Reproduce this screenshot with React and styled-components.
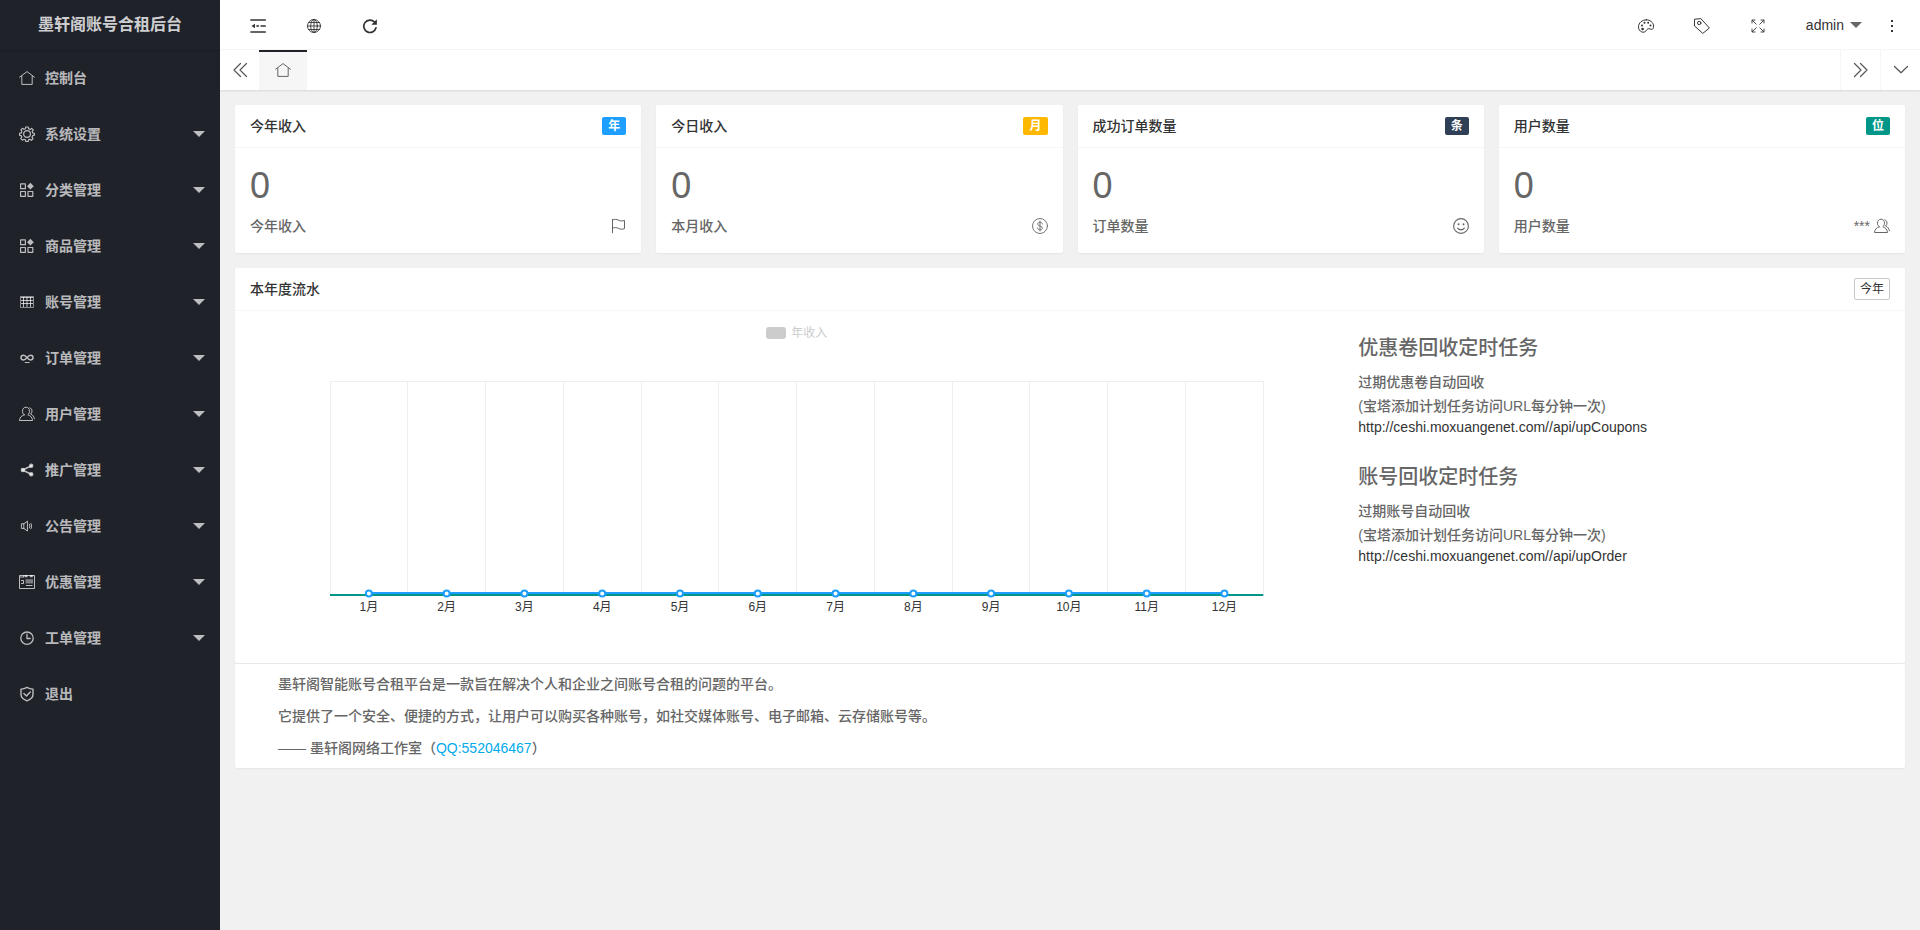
import React, { useState } from "react";
import styled, { createGlobalStyle, css } from "styled-components";

const MONTHS = Array.from({ length: 12 }, (_, i) => `${i + 1}月`);

const stroke = {
  fill: "none",
  stroke: "currentColor",
  strokeLinecap: "round",
  strokeLinejoin: "round",
};

const icons = {
  home: (
    <g {...stroke}>
      <path d="M.6 7.2 8 1.6l7.400 5.600M2.800 6.200v8.200h10.400V6.200" />
    </g>
  ),
  gear: (
    <g {...stroke} strokeWidth="1.200">
      <circle cx="8" cy="8" r="3.400" />
      <path d="M6.800 1h2.400l.4 1.800 1.400.6 1.600-1 1.600 1.600-1 1.600.6 1.400 1.600.4v1.800l-1.700.5-.6 1.400 1 1.600-1.600 1.600-1.600-1-1.400.6-.4 1.600H6.800l-.4-1.700-1.400-.6-1.600 1-1.600-1.600 1-1.600-.6-1.300-1.600-.4V7.400l1.700-.5.6-1.400-1-1.600 1.600-1.600 1.500 1 1.400-.6z" />
    </g>
  ),
  component: (
    <>
      <g {...stroke} strokeWidth="1.200">
        <path d="M1.600 1.900h4.800v4.800H1.600zM1.600 9.500h4.800v4.800H1.600zM9 9.500h4.800v4.800H9z" />
      </g>
      <path fill="currentColor" d="m11.400.8 3.400 3.400-3.400 3.400L8 4.200z" />
    </>
  ),
  table: (
    <g {...stroke} strokeLinecap="butt">
      <path d="M1.500 2.500h13v11h-13z" opacity=".7" />
      <path d="M2 3.500h12M2 6.500h12M2 9.500h12M4.500 3v10M8 3v10M11.500 3v10" />
    </g>
  ),
  infinity: (
    <g {...stroke} strokeWidth="1.500">
      <path d="M8 7.600C6.800 6 5.800 5.200 4.400 5.200a2.400 2.400 0 0 0 0 4.800C5.800 10 6.800 9.200 8 7.600s2.200-2.400 3.600-2.400a2.400 2.400 0 0 1 0 4.800C10.200 10 9.200 9.200 8 7.600z" />
      <path d="M6.200 12.500h4" strokeWidth="1" />
    </g>
  ),
  users: (
    <g {...stroke}>
      <path d="M5.200 8.800C4.100 8 3.500 6.700 3.500 5.200c0-2.300 1.400-4 3.500-4s3.500 1.700 3.500 4c0 1.500-.6 2.800-1.700 3.600 2.700.9 4.500 2.600 4.700 5.700H.5c.2-3.100 2-4.800 4.700-5.700z" />
      <path d="M10.800 1.800c1.500.5 2.200 1.800 2.200 3.200 0 1.200-.5 2.300-1.400 3 2.100.9 3.400 2.500 3.800 4.800" />
    </g>
  ),
  share: (
    <>
      <path d="M12.600 3.800 3.600 8l9 4.500" {...stroke} strokeWidth="1.600" />
      <g fill="currentColor">
        <circle cx="3.800" cy="8" r="2.200" />
        <circle cx="12.200" cy="3.800" r="2.200" />
        <circle cx="12.200" cy="12.300" r="2.200" />
      </g>
    </>
  ),
  speaker: (
    <g {...stroke}>
      <path d="M2.800 5.800h2l3.600-2.600v9.800L4.800 10.400h-2zM4.800 5.800v4.600M10.300 6.200c.8 1.200.8 2.600 0 3.800M11.900 5.400c1 1.700 1 3.700 0 5.400" />
    </g>
  ),
  coupon: (
    <>
      <g {...stroke} strokeLinecap="butt" strokeLinejoin="miter">
        <path d="M.5 1.500h15v13H.5zM7 11.500h6.500M2 6.500h2.500v3H2" />
      </g>
      <path
        fill="currentColor"
        d="M5.500 1h3v2.200h-3zM10.800 1h3v2.200h-3zM4 1.500h1v2H1v-1h3z"
      />
      <path fill="currentColor" d="M6.500 5.200H14v4.300H6.500z" opacity=".6" />
    </>
  ),
  clock: (
    <g {...stroke} strokeWidth="1.300">
      <circle cx="8" cy="8.200" r="6.200" />
      <path d="M8 4.200v4.300h3.200" />
    </g>
  ),
  shield: (
    <g {...stroke} strokeWidth="1.400">
      <path d="M8 1.400c1.800 1 3.800 1.600 6 1.700v5.300c0 2.900-2.400 4.900-6 6.400-3.600-1.500-6-3.500-6-6.400V3.100c2.200-.1 4.200-.7 6-1.700z" />
      <path d="m4.900 7.600 2.500 2.500 3.900-4" />
    </g>
  ),
  shrink: (
    <>
      <path
        d="M.8 2h14.600M11 8h4.400M6.800 8h1.700M.8 14h14.600"
        {...stroke}
        strokeWidth="1.300"
      />
      <path fill="currentColor" d="M1.500 8 5 5.700v4.600z" />
    </>
  ),
  globe: (
    <g {...stroke} strokeWidth=".9">
      <circle cx="8" cy="8" r="6.500" />
      <ellipse cx="8" cy="8" rx="3.300" ry="6.500" />
      <path d="M8 1.500v13M1.500 8h13M2.600 4.500h10.800M2.600 11.500h10.800" />
    </g>
  ),
  refresh: (
    <>
      <path
        d="M14 9.800A6.200 6.200 0 1 1 12.500 4"
        {...stroke}
        strokeWidth="1.700"
      />
      <path fill="currentColor" d="M14.900 1.300v5.500H9.300z" />
    </>
  ),
  palette: (
    <>
      <path
        d="M8.300 1.800C12 1.800 15.500 4.300 15.500 8c0 2-.5 3.600-1.800 3.400-1.300-.2-1.900-.9-3.200-.7-1.500.2-1.700 1.300-2.700 2.400-.9 1-2.300 1.500-4.100.8C1.500 13 .5 11 .5 8.800c0-4 3.800-7 7.800-7z"
        {...stroke}
      />
      <g fill="currentColor">
        <circle cx="4.600" cy="11" r="1.300" />
        <circle cx="4" cy="7.500" r="1" />
        <circle cx="6.500" cy="4.800" r="1" />
        <circle cx="10.200" cy="4.800" r="1" />
        <circle cx="12.500" cy="7.600" r="1" />
      </g>
    </>
  ),
  tag: (
    <g {...stroke}>
      <path d="M.8 1.200 6.800.6l8.600 9.400-6.600 5.400L.8 8.200z" />
      <circle cx="5.200" cy="5" r="1.700" />
    </g>
  ),
  expand: (
    <g {...stroke} strokeWidth=".9">
      <path d="M2 5V2h3M2.200 2.200l4 4M11 2h3v3M13.800 2.200l-4 4M2 11v3h3M2.200 13.800l4-4M14 11v3h-3M13.800 13.800l-4-4" />
    </g>
  ),
  more: (
    <g fill="currentColor">
      <path d="M7 2h2v2H7zM7 7h2v2H7zM7 12h2v2H7z" />
    </g>
  ),
  left: (
    <g {...stroke} strokeWidth="1.200">
      <path d="M8.500 1.500 2 8l6.500 6.500M14.500 1.500 8 8l6.500 6.500" />
    </g>
  ),
  right: (
    <g {...stroke} strokeWidth="1.200">
      <path d="M1.500 1.500 8 8l-6.500 6.500M7.500 1.500 14 8l-6.500 6.500" />
    </g>
  ),
  down: (
    <g {...stroke} strokeWidth="1.200">
      <path d="m1.500 4.500 6.500 6.300 6.500-6.300" />
    </g>
  ),
  flag: (
    <g {...stroke}>
      <path d="M2.500 1.500v13.300M2.500 2c2-1 4-.8 6 .2s4 1 6 .2v8.200c-2 .8-4 .8-6-.2s-4-1.100-6-.2" />
    </g>
  ),
  dollar: (
    <g {...stroke} strokeWidth=".9">
      <circle cx="8" cy="8" r="7.500" />
      <path d="M10.300 6c-.1-1.100-1-1.700-2.300-1.700S5.700 4.900 5.700 6c0 2.600 4.700 1.400 4.700 4 0 1.200-1 1.800-2.400 1.800S5.600 11.100 5.500 10M8 3v10" />
    </g>
  ),
  smile: (
    <>
      <g {...stroke} strokeWidth="1.100">
        <circle cx="8" cy="8" r="7.400" />
        <path d="M4.600 10.200c1.800 2.200 5 2.200 6.800 0" />
      </g>
      <circle cx="5.500" cy="6.300" r="1" fill="currentColor" />
      <circle cx="10.500" cy="6.300" r="1" fill="currentColor" />
    </>
  ),
};

const Icon = ({ name, size = 16 }) => (
  <svg width={size} height={size} viewBox="0 0 16 16" aria-hidden="true">
    {icons[name]}
  </svg>
);

const menu = [
  { icon: "home", label: "控制台" },
  { icon: "gear", label: "系统设置", nested: true },
  { icon: "component", label: "分类管理", nested: true },
  { icon: "component", label: "商品管理", nested: true },
  { icon: "table", label: "账号管理", nested: true },
  { icon: "infinity", label: "订单管理", nested: true },
  { icon: "users", label: "用户管理", nested: true },
  { icon: "share", label: "推广管理", nested: true },
  { icon: "speaker", label: "公告管理", nested: true },
  { icon: "coupon", label: "优惠管理", nested: true },
  { icon: "clock", label: "工单管理", nested: true },
  { icon: "shield", label: "退出" },
];

const stats = [
  { title: "今年收入", unit: "年", color: "#1e9fff", label: "今年收入", icon: "flag" },
  { title: "今日收入", unit: "月", color: "#ffb800", label: "本月收入", icon: "dollar" },
  { title: "成功订单数量", unit: "条", color: "#2f4056", label: "订单数量", icon: "smile" },
  { title: "用户数量", unit: "位", color: "#009688", label: "用户数量", icon: "users", note: "***" },
];

const tasks = [
  {
    title: "优惠卷回收定时任务",
    desc: "过期优惠卷自动回收",
    url: "http://ceshi.moxuangenet.com//api/upCoupons",
  },
  {
    title: "账号回收定时任务",
    desc: "过期账号自动回收",
    url: "http://ceshi.moxuangenet.com//api/upOrder",
  },
];

export default function App() {
  const [active, setActive] = useState(0);

  return (
    <>
      <GlobalStyle />
      <Layout>
        <Sidebar>
          <Logo>墨轩阁账号合租后台</Logo>
          <nav>
            {menu.map(({ icon, label, nested }, index) => (
              <MenuLink
                key={label}
                href="#"
                aria-current={index === active ? "page" : undefined}
                onClick={() => setActive(index)}
              >
                <Icon name={icon} />
                <span>{label}</span>
                {nested && <Caret />}
              </MenuLink>
            ))}
          </nav>
        </Sidebar>
        <Main>
          <Header />
          <TabBar />
          <Content>
            <StatGrid>
              {stats.map((stat) => (
                <StatCard key={stat.title} {...stat} />
              ))}
            </StatGrid>
            <section>
              <Card>
                <CardHeader>
                  <h2>本年度流水</h2>
                  <YearButton type="button">今年</YearButton>
                </CardHeader>
                <ReportBody>
                  <YearChart />
                  <TaskList>
                    {tasks.map(({ title, desc, url }) => (
                      <Task key={title}>
                        <h3>{title}</h3>
                        <p>{desc}</p>
                        <p>(宝塔添加计划任务访问URL每分钟一次)</p>
                        <a href={url}>{url}</a>
                      </Task>
                    ))}
                  </TaskList>
                </ReportBody>
              </Card>
              <About>
                <p>墨轩阁智能账号合租平台是一款旨在解决个人和企业之间账号合租的问题的平台。</p>
                <p>
                  它提供了一个安全、便捷的方式，让用户可以购买各种账号，如社交媒体账号、电子邮箱、云存储账号等。
                </p>
                <p>
                  —— 墨轩阁网络工作室（<a href="#">QQ:552046467</a>）
                </p>
              </About>
            </section>
          </Content>
        </Main>
      </Layout>
    </>
  );
}

const Header = () => (
  <Toolbar>
    <ToolGroup>
      <ToolButton type="button" aria-label="侧边伸缩">
        <Icon name="shrink" />
      </ToolButton>
      <ToolButton type="button" aria-label="前台">
        <Icon name="globe" />
      </ToolButton>
      <ToolButton type="button" aria-label="刷新">
        <Icon name="refresh" />
      </ToolButton>
    </ToolGroup>
    <ToolGroup>
      <ToolButton type="button" aria-label="主题">
        <Icon name="palette" />
      </ToolButton>
      <ToolButton type="button" aria-label="便签">
        <Icon name="tag" />
      </ToolButton>
      <ToolButton type="button" aria-label="全屏">
        <Icon name="expand" />
      </ToolButton>
      <UserButton type="button">
        admin
        <Caret />
      </UserButton>
      <ToolButton type="button" aria-label="更多" $narrow>
        <Icon name="more" />
      </ToolButton>
    </ToolGroup>
  </Toolbar>
);

const TabBar = () => (
  <Tabs>
    <TabControl type="button" aria-label="向左">
      <Icon name="left" />
    </TabControl>
    <HomeTab type="button" aria-label="主页">
      <Icon name="home" />
    </HomeTab>
    <Spacer />
    <TabControl type="button" aria-label="向右" $divided>
      <Icon name="right" />
    </TabControl>
    <TabControl type="button" aria-label="标签操作" $divided>
      <Icon name="down" />
    </TabControl>
  </Tabs>
);

const StatCard = ({ title, unit, color, label, icon, note }) => (
  <Card>
    <CardHeader>
      <h2>{title}</h2>
      <Badge $color={color}>{unit}</Badge>
    </CardHeader>
    <StatBody>
      <BigNumber>0</BigNumber>
      <StatFoot>
        <span>{label}</span>
        <StatNote>
          {note}
          <Icon name={icon} />
        </StatNote>
      </StatFoot>
    </StatBody>
  </Card>
);

const YearChart = () => {
  const step = 100 / MONTHS.length;
  const center = (i) => `${(i + 0.5) * step}%`;

  return (
    <Chart>
      <Legend>
        <i />
        年收入
      </Legend>
      <Plot>
        <g stroke="#eee" shapeRendering="crispEdges">
          <line x1="0" x2="100%" y1="0" y2="0" />
          {[...MONTHS, ""].map((month, i) => (
            <line
              key={month}
              x1={`${i * step}%`}
              x2={`${i * step}%`}
              y1="0"
              y2="213"
            />
          ))}
        </g>
        <line
          x1={center(0)}
          x2={center(11)}
          y1="212"
          y2="212"
          stroke="#1e9fff"
          strokeWidth="2"
        />
        <line
          x1="0"
          x2="100%"
          y1="214"
          y2="214"
          stroke="#009688"
          strokeWidth="2"
        />
        {MONTHS.map((month, i) => (
          <circle
            key={month}
            cx={center(i)}
            cy="212.5"
            r="3"
            fill="#fff"
            stroke="#1e9fff"
            strokeWidth="2"
          />
        ))}
      </Plot>
      <Months>
        {MONTHS.map((month) => (
          <span key={month}>{month}</span>
        ))}
      </Months>
    </Chart>
  );
};

const GlobalStyle = createGlobalStyle`
  * {
    box-sizing: border-box;
  }

  body {
    margin: 0;
    background: #f1f1f1;
    color: #666;
    font: 500 14px/24px "Liberation Sans", "Noto Sans CJK SC", sans-serif;
  }

  h2, h3, p {
    margin: 0;
    font-weight: 500;
  }

  a {
    color: #333;
    text-decoration: none;
  }

  button {
    border: 0;
    padding: 0;
    background: none;
    color: #333;
    font: inherit;
    cursor: pointer;
  }

  svg {
    display: block;
    flex: none;
  }
`;

const Layout = styled.div`
  display: flex;
  min-height: 100vh;
`;

const Sidebar = styled.aside`
  flex: none;
  width: 220px;
  background: #20222a;
`;

const Logo = styled.div`
  height: 50px;
  line-height: 50px;
  text-align: center;
  font-size: 16px;
  font-weight: bold;
  color: rgba(255, 255, 255, 0.8);
  box-shadow: 0 1px 2px rgba(0, 0, 0, 0.15);
`;

const Caret = styled.i`
  border: 6px solid transparent;
  border-top-color: currentColor;
  border-bottom-width: 0;
`;

const MenuLink = styled.a`
  display: flex;
  align-items: center;
  gap: 10px;
  height: 56px;
  padding: 0 15px 0 19px;
  color: rgba(255, 255, 255, 0.7);
  font-weight: bold;

  ${Caret} {
    margin-left: auto;
  }
`;

const Main = styled.div`
  flex: 1;
  min-width: 0;
`;

const Toolbar = styled.header`
  display: flex;
  justify-content: space-between;
  height: 50px;
  padding: 0 8px 0 10px;
  background: #fff;
  border-bottom: 1px solid #f6f6f6;
`;

const ToolGroup = styled.div`
  display: flex;
`;

const ToolButton = styled.button`
  display: flex;
  align-items: center;
  justify-content: center;
  width: ${({ $narrow }) => ($narrow ? "40px" : "56px")};
  padding-top: 2px;
`;

const UserButton = styled.button`
  display: flex;
  align-items: center;
  gap: 6px;
  padding: 0 10px 0 20px;

  ${Caret} {
    color: #666;
  }
`;

const Tabs = styled.div`
  position: relative;
  display: flex;
  height: 40px;
  background: #fff;
  box-shadow: 0 1px 2px rgba(0, 0, 0, 0.1);
`;

const TabControl = styled.button`
  display: flex;
  align-items: center;
  justify-content: center;
  width: 39px;
  color: #555;

  ${({ $divided }) =>
    $divided &&
    css`
      width: 40px;
      border-left: 1px solid #f6f6f6;
    `}
`;

const HomeTab = styled.button`
  display: flex;
  align-items: center;
  justify-content: center;
  width: 48px;
  background: #f6f6f6;
  box-shadow: inset 0 2px #20222a;
  color: #666;
`;

const Spacer = styled.div`
  flex: 1;
`;

const Content = styled.main`
  display: grid;
  gap: 15px;
  padding: 15px;
`;

const StatGrid = styled.div`
  display: grid;
  grid-template-columns: repeat(4, 1fr);
  gap: 15px;
`;

const Card = styled.div`
  background: #fff;
  border-radius: 2px;
  box-shadow: 0 1px 2px rgba(0, 0, 0, 0.05);
`;

const CardHeader = styled.div`
  display: flex;
  align-items: center;
  justify-content: space-between;
  height: 43px;
  padding: 0 15px;
  border-bottom: 1px solid #f6f6f6;
  color: #333;

  h2 {
    font-size: 14px;
  }
`;

const Badge = styled.span`
  padding: 0 6px;
  border-radius: 2px;
  background: ${({ $color }) => $color};
  color: #fff;
  font-size: 12px;
  font-weight: bold;
  line-height: 18px;
`;

const StatBody = styled.div`
  padding: 15px;
`;

const BigNumber = styled.p`
  padding: 5px 0 10px;
  font-size: 36px;
  line-height: 36px;
`;

const StatFoot = styled.div`
  display: flex;
  justify-content: space-between;
`;

const StatNote = styled.span`
  display: flex;
  align-items: center;
  gap: 4px;
`;

const YearButton = styled.button`
  height: 22px;
  padding: 0 5px;
  border: 1px solid #c9c9c9;
  border-radius: 2px;
  font-size: 12px;
  font-weight: 400;
  line-height: 20px;
`;

const ReportBody = styled.div`
  display: grid;
  grid-template-columns: 2fr 1fr;
  padding: 10px 15px;
`;

const Chart = styled.div`
  height: 332px;
  padding: 0 80px;
`;

const Legend = styled.div`
  display: flex;
  align-items: center;
  justify-content: center;
  gap: 5px;
  height: 24px;
  margin-bottom: 36px;
  color: #ccc;
  font-size: 12px;
  font-weight: 400;

  i {
    width: 20px;
    height: 12px;
    border-radius: 3px;
    background: #ccc;
  }
`;

const Plot = styled.svg`
  width: 100%;
  height: 214px;
  overflow: visible;
`;

const Months = styled.div`
  display: grid;
  grid-template-columns: repeat(12, 1fr);
  color: #333;
  font-size: 12px;
  font-weight: 400;
  text-align: center;
`;

const TaskList = styled.div`
  display: flex;
  flex-direction: column;
  gap: 26px;
  padding: 12px 15px;
`;

const Task = styled.div`
  h3 {
    margin-bottom: 6px;
    font-size: 20px;
    line-height: 31px;
  }

  a {
    display: block;
    line-height: 18px;
  }
`;

const About = styled(Card)`
  display: grid;
  gap: 8px;
  margin-top: 1px;
  padding: 8px 43px;

  a {
    color: #01aaed;
  }
`;
